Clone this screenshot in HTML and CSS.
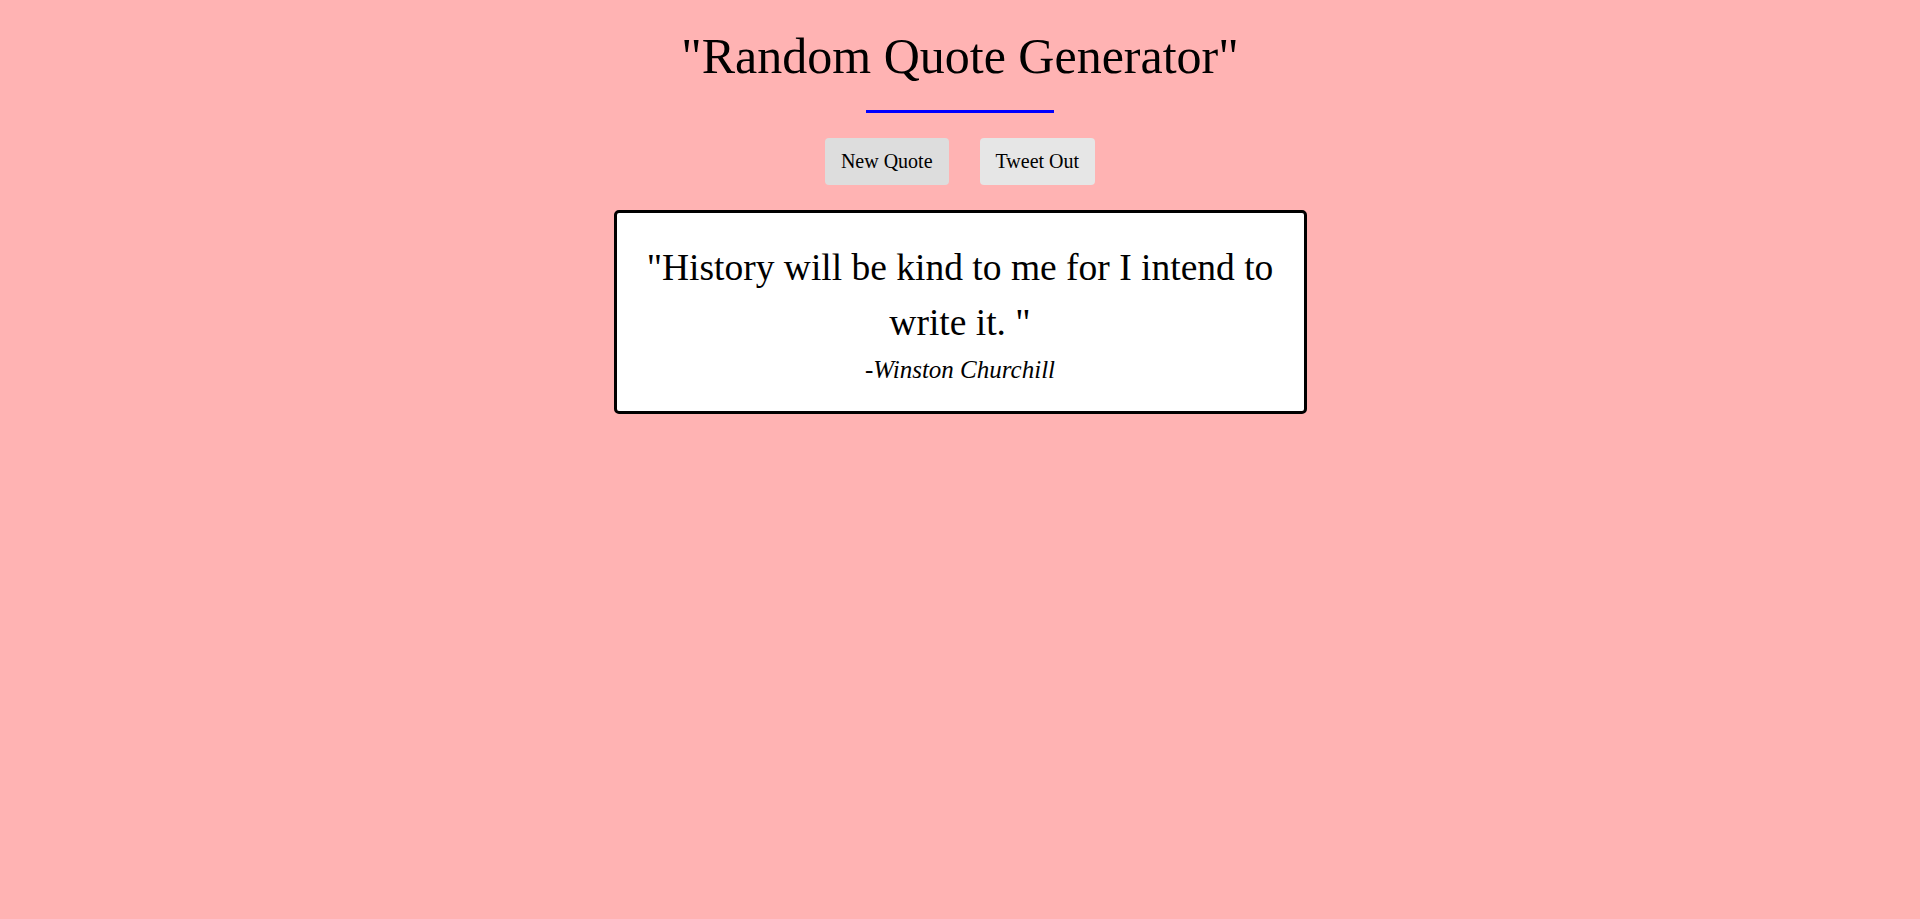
FILE: index.html
```html
<!DOCTYPE html>
<html lang="en">
<head>
<meta charset="utf-8">
<title>Random Quote Generator</title>
<link rel="stylesheet" href="styles.css">
</head>
<body>
<main class="page">
  <h1 class="title">"Random Quote Generator"</h1>
  <div class="rule"></div>
  <div class="actions">
    <button class="btn btn-new">New Quote</button>
    <button class="btn btn-tweet">Tweet Out</button>
  </div>
  <section class="card">
    <p class="quote">"History will be kind to me for I intend to write it. "</p>
    <p class="author">-<i>Winston Churchill</i></p>
  </section>
</main>
</body>
</html>
```

FILE: styles.css
```css
html, body {
  margin: 0;
  padding: 0;
}

body {
  background: #ffb3b3;
  font-family: "Liberation Serif", "Times New Roman", serif;
  color: #000;
  min-height: 919px;
}

.page {
  display: flex;
  flex-direction: column;
  align-items: center;
  padding-top: 28px;
}

.title {
  margin: 0;
  font-size: 50px;
  font-weight: normal;
  line-height: 56px;
}

.rule {
  width: 188px;
  height: 3px;
  background: #0000ff;
  margin-top: 26px;
}

.actions {
  display: flex;
  gap: 31px;
  margin-top: 25px;
}

.btn {
  font-family: "Liberation Serif", "Times New Roman", serif;
  font-size: 20px;
  line-height: 23px;
  padding: 12px 16px;
  border: none;
  border-radius: 4px;
  color: #000;
}

.btn-new {
  background: #dddddd;
}

.btn-tweet {
  background: #e6e6e6;
}

.card {
  margin-top: 25px;
  width: 693px;
  box-sizing: border-box;
  background: #fff;
  border: 3px solid #000;
  border-radius: 5px;
  padding: 27px 20px 28px;
  text-align: center;
}

.quote {
  margin: 0;
  font-size: 37.5px;
  line-height: 55px;
}

.author {
  margin: 6px 0 0;
  font-size: 25px;
  line-height: 27px;
}
```
